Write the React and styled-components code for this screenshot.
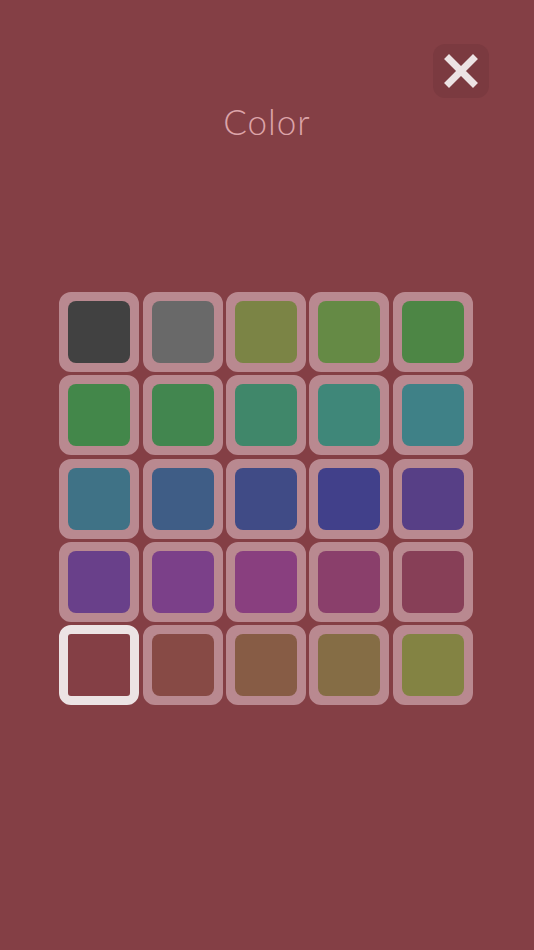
import React, { useState } from "react";
import styled, { createGlobalStyle } from "styled-components";

const GlobalStyle = createGlobalStyle`
  html, body {
    margin: 0;
    padding: 0;
    background: #843f45;
  }
  body {
    font-family: "Lato", "Open Sans", sans-serif;
  }
`;

const Screen = styled.div`
  width: 534px;
  height: 950px;
  background: #843f45;
  display: flex;
  flex-direction: column;
  align-items: center;
  position: relative;
  box-sizing: border-box;
  padding-top: 96px;
`;

const CloseButton = styled.button`
  position: absolute;
  top: 44px;
  left: 433px;
  width: 56px;
  height: 54px;
  border: none;
  border-radius: 12px;
  background: #7b3a40;
  display: flex;
  align-items: center;
  justify-content: center;
  padding: 0;
  cursor: pointer;
`;

const Title = styled.h1`
  margin: 0;
  font-family: "Lato", sans-serif;
  font-weight: 300;
  font-size: 35px;
  letter-spacing: 1px;
  color: #dca4a9;
  line-height: 50px;
`;

const Grid = styled.div`
  margin-top: 146px;
  margin-left: -2px;
  display: grid;
  grid-template-columns: repeat(5, 80px);
  grid-auto-rows: 80px;
  column-gap: 3.3px;
  row-gap: 3.3px;
`;

const Swatch = styled.div`
  box-sizing: border-box;
  width: 80px;
  height: 80px;
  border-radius: 12px;
  border: 9px solid ${(p) => (p.$selected ? "#ece3e4" : "#b98990")};
  background: ${(p) => (p.$selected ? "transparent" : "#b98990")};
  cursor: pointer;
  overflow: hidden;
`;

const Fill = styled.div`
  width: 100%;
  height: 100%;
  border-radius: 8px;
  background: ${(p) => p.$color};
`;

const colors = [
  "#414141", "#696969", "#7b8445", "#658a45", "#4d8645",
  "#43874a", "#42864f", "#40876a", "#3f8779", "#3f8187",
  "#3f7286", "#3f5d86", "#404b86", "#41408a", "#573f86",
  "#69408a", "#7b4089", "#893f7f", "#8a3f6b", "#873f57",
  "#843f45", "#874a45", "#875c45", "#856d45", "#838343",
];

const App = () => {
  const [selected, setSelected] = useState(20);

  return (
    <>
      <GlobalStyle />
      <Screen>
        <CloseButton aria-label="Close">
          <svg width="34" height="34" viewBox="0 0 34 34">
            <path
              d="M5 5 L29 29 M29 5 L5 29"
              stroke="#ece3e4"
              strokeWidth="7"
              strokeLinecap="square"
            />
          </svg>
        </CloseButton>
        <Title>Color</Title>
        <Grid>
          {colors.map((c, i) => (
            <Swatch
              key={i}
              $selected={i === selected}
              onClick={() => setSelected(i)}
            >
              <Fill $color={c} />
            </Swatch>
          ))}
        </Grid>
      </Screen>
    </>
  );
};

export default App;
